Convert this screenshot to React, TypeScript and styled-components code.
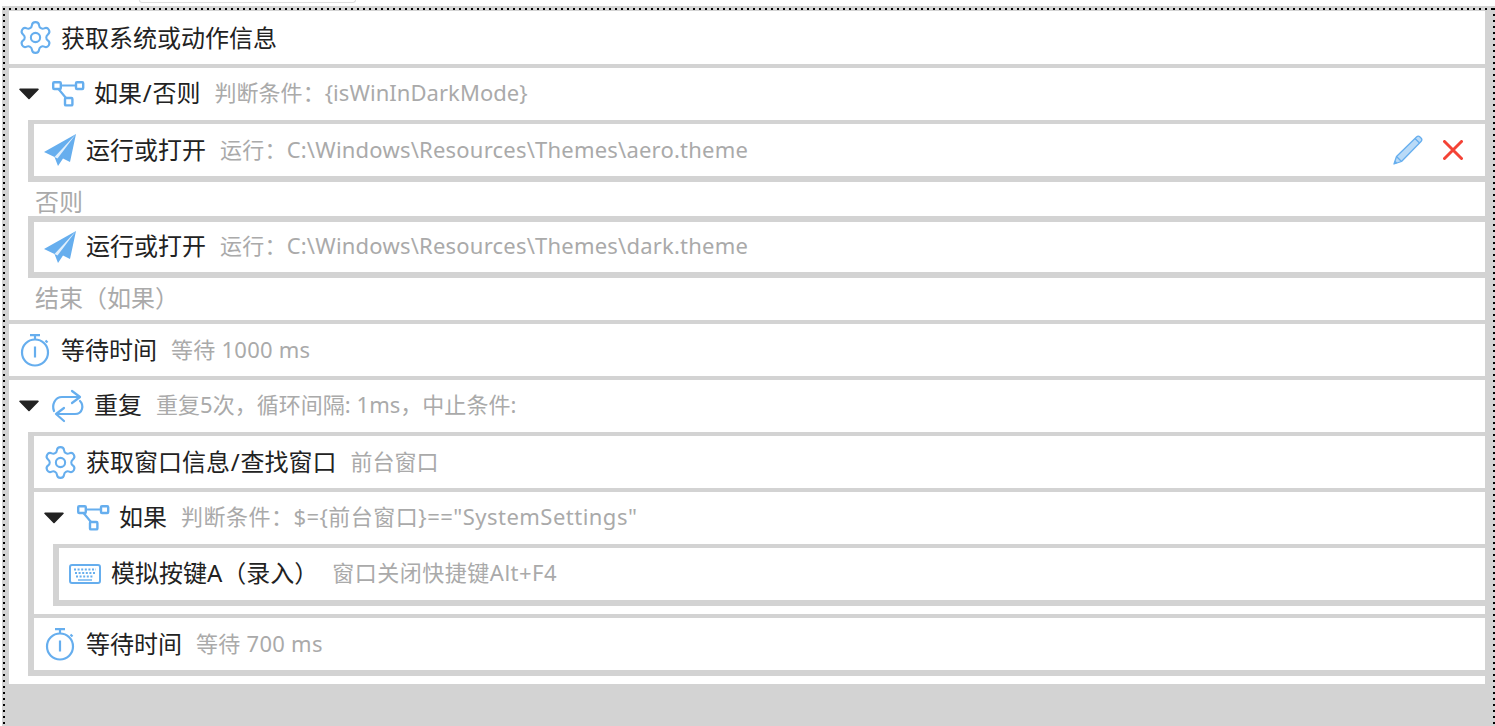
import React from "react";
import styled, { createGlobalStyle } from "styled-components";
import { Settings } from "lucide-react";

const BLUE = "#66aeee";
const GRAY = "#d3d3d3";
const dotsX = "repeating-linear-gradient(90deg, #000 0 2px, transparent 2px 6px)";
const dotsY = "repeating-linear-gradient(180deg, #000 0 2px, transparent 2px 6px)";

const Global = createGlobalStyle`
  html, body { margin: 0; padding: 0; height: 100%; overflow: hidden; background: #fff; }
  body { font-family: "Noto Sans", "Noto Sans CJK SC", sans-serif; }
`;

const TopBar = styled.div`
  height: 6px;
  overflow: hidden;
`;
const TopStub = styled.div`
  width: 215px;
  height: 2px;
  margin-left: 139px;
  border: 1px solid #ddd;
  border-top: none;
  border-radius: 0 0 6px 6px;
`;
const Canvas = styled.div`
  margin-left: 2px;
  height: 740px;
  box-sizing: border-box;
  background-color: ${GRAY};
  background-image: ${dotsX}, ${dotsY}, ${dotsY};
  background-size: 100% 2px, 2px 100%, 2px 100%;
  background-position: 1px 2px, 1px 2px, right 0 top 2px;
  background-repeat: no-repeat;
  padding: 5px 10px 0 7px;
  display: flex;
  flex-direction: column;
  gap: 4px;
`;
const Step = styled.div`
  background: #fff;
  display: flex;
  flex-direction: column;
`;
const Row = styled.div<{ $h?: number }>`
  height: ${(p) => p.$h ?? 52}px;
  flex: none;
  display: flex;
  align-items: center;
  padding: 0 22px 0 11px;
  background: #fff;
`;
const Children = styled.div<{ $after?: number; $top?: number }>`
  margin-left: 19px;
  border-left: 6px solid ${GRAY};
  border-top: ${(p) => p.$top ?? 4}px solid ${GRAY};
  border-bottom: 6px solid ${GRAY};
  background: ${GRAY};
  display: flex;
  flex-direction: column;
  gap: 4px;
  margin-bottom: ${(p) => p.$after ?? 0}px;
`;
const Caret = styled.span`
  width: 20px;
  height: 12px;
  margin: 0 14px 0 -1px;
  flex: none;
  display: flex;
`;
const IconSlot = styled.span`
  width: 30px;
  height: 32px;
  margin-right: 11px;
  flex: none;
  display: flex;
  align-items: center;
  justify-content: center;
  svg { flex: none; overflow: visible; }
`;
const Texts = styled.div<{ $lift?: number }>`
  display: flex;
  align-items: center;
  margin-top: ${(p) => -(p.$lift ?? 0)}px;
`;
const Title = styled.span`
  font-size: 24px;
  line-height: 32px;
  color: #222;
  white-space: nowrap;
  flex: none;
`;
const Slash = styled.span`
  padding: 0 0.75px;
`;
const Sub = styled.span<{ $track?: number }>`
  font-size: 22px;
  line-height: 32px;
  color: #aaa;
  margin: -2px 0 0 14px;
  letter-spacing: ${(p) => p.$track ?? 0}px;
  white-space: nowrap;
`;
const Note = styled.div<{ $h: number; $top?: number; $bottom?: number }>`
  height: ${(p) => p.$h}px;
  box-sizing: border-box;
  padding: ${(p) => p.$top ?? 0}px 0 ${(p) => p.$bottom ?? 0}px 26px;
  font-size: 24px;
  line-height: 32px;
  color: #aaa;
  background: #fff;
  display: flex;
  align-items: center;
`;
const Actions = styled.div`
  margin-left: auto;
  display: flex;
  align-items: center;
  gap: 20px;
`;

const CaretIcon = () => (
  <Caret>
    <svg width="20" height="12" viewBox="0 0 20 12">
      <path d="M1 .5h18a.8.8 0 0 1 .6 1.300L10.600 11a.8.8 0 0 1-1.200 0L.4 1.800A.8.8 0 0 1 1 .5z" fill="#222" />
    </svg>
  </Caret>
);

const Gear = () => <Settings size={37} color={BLUE} strokeWidth={1.35} />;

const Tree = () => (
  <svg width="32" height="26" viewBox="0 0 32 26" fill="none" stroke={BLUE} strokeWidth="2.400">
    <rect x="1.200" y="1.200" width="7.600" height="6.800" rx="1" />
    <rect x="24" y="1.200" width="7.200" height="6.800" rx="1" />
    <rect x="13" y="17" width="7.400" height="7.400" rx="1" />
    <path d="M9 4.500h15M6.500 8l7.500 9" strokeWidth="2.200" />
  </svg>
);

const Plane = () => (
  <svg width="32" height="32" viewBox="0 0 32 32">
    <path d="M32 0 0 18l10.500 5L14 32l5-7.500 7 3.500z" fill={BLUE} />
    <path d="M32 0 10.500 23l3 1.500z" fill="#fff" opacity=".8" />
  </svg>
);

const Watch = () => (
  <svg width="30" height="32" viewBox="0 0 30 32" fill="none" stroke={BLUE} strokeWidth="2.200">
    <circle cx="15" cy="18.500" r="13" />
    <path d="M10 1.200h10M15 1.200v4M15 12.500v11M25.500 6.500l2 2" />
  </svg>
);

const Loop = () => (
  <svg width="32" height="32" viewBox="0 0 32 32" fill="none" stroke={BLUE} strokeWidth="2.200" strokeLinecap="round" strokeLinejoin="round">
    <path d="M2 21C-.5 15 3 7 10 7h18M20 1l8 6-8 6" />
    <path d="M28 11c4 4 3 13-5 13H4M12 18l-8 6 8 7" />
  </svg>
);

const Keys = () => (
  <svg width="32" height="20" viewBox="0 0 32 20" fill="none">
    <rect x="1" y="1" width="30" height="18" rx="2" stroke={BLUE} strokeWidth="2" />
    <path d="M5 5.500h22M6 9h20M7 12.500h18" stroke={BLUE} strokeWidth="2" strokeDasharray="2 1.600" />
    <path d="M9 16h14" stroke={BLUE} strokeWidth="1.400" />
  </svg>
);

const Pencil = () => (
  <svg width="30" height="30" viewBox="0 0 30 30">
    <path d="M1 29 3.500 21.500 23.500 2a2.500 2.500 0 0 1 3.500 0l1 1a2.500 2.500 0 0 1 0 3.500L8.500 26.500z" fill="#b9daf7" stroke={BLUE} strokeWidth="1.300" strokeLinejoin="round" />
    <path d="M3.500 21.500 8.500 26.500M22 3.500l4.500 4.500" stroke={BLUE} strokeWidth="1.300" fill="none" />
    <path d="M1 29l1-3.500 2.500 2.500z" fill={BLUE} />
  </svg>
);

const Cross = () => (
  <svg width="20" height="20" viewBox="0 0 20 20">
    <path d="M1.500 1.500 18.500 18.500M18.500 1.500 1.500 18.500" stroke="#f44336" strokeWidth="3" strokeLinecap="round" />
  </svg>
);

type RowProps = {
  icon: React.ReactNode;
  title: React.ReactNode;
  sub?: string;
  track?: number;
  caret?: boolean;
  h?: number;
  lift?: number;
  actions?: boolean;
};

const StepRow = ({ icon, title, sub, track, caret, h, lift, actions }: RowProps) => (
  <Row $h={h}>
    {caret && <CaretIcon />}
    <IconSlot>{icon}</IconSlot>
    <Texts $lift={lift}>
      <Title>{title}</Title>
      {sub && <Sub $track={track}>{sub}</Sub>}
    </Texts>
    {actions && (
      <Actions>
        <Pencil />
        <Cross />
      </Actions>
    )}
  </Row>
);

export default function App() {
  return (
    <>
      <Global />
      <TopBar>
        <TopStub />
      </TopBar>
      <Canvas>
        <StepRow h={53} icon={<Gear />} title="获取系统或动作信息" />
        <Step>
          <StepRow caret lift={2} icon={<Tree />} title={<>如果<Slash>/</Slash>否则</>} sub="判断条件：{isWinInDarkMode}" track={0.05} />
          <Children>
            <StepRow icon={<Plane />} title="运行或打开" sub="运行：C:\Windows\Resources\Themes\aero.theme" track={0.21} actions />
          </Children>
          <Note $h={34} $top={6}>否则</Note>
          <Children $top={6}>
            <StepRow h={50} lift={2} icon={<Plane />} title="运行或打开" sub="运行：C:\Windows\Resources\Themes\dark.theme" track={0.21} />
          </Children>
          <Note $h={42} $bottom={2}>结束（如果）</Note>
        </Step>
        <StepRow icon={<Watch />} title="等待时间" sub="等待 1000 ms" track={0.25} />
        <Step>
          <StepRow caret lift={2} icon={<Loop />} title="重复" sub="重复5次，循环间隔: 1ms，中止条件:" track={0.03} />
          <Children $after={8}>
            <StepRow icon={<Gear />} title={<>获取窗口信息<Slash>/</Slash>查找窗口</>} sub="前台窗口" />
            <Step>
              <StepRow caret lift={2} icon={<Tree />} title="如果" sub='判断条件：$={前台窗口}=="SystemSettings"' track={0.48} />
              <Children $after={8}>
                <StepRow lift={2} icon={<Keys />} title="模拟按键A（录入）" sub="窗口关闭快捷键Alt+F4" track={0.5} />
              </Children>
            </Step>
            <StepRow icon={<Watch />} title="等待时间" sub="等待 700 ms" track={0.27} />
          </Children>
        </Step>
      </Canvas>
    </>
  );
}
